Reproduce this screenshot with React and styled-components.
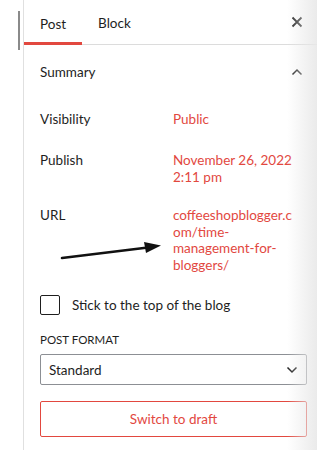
import React from "react";
import styled, { createGlobalStyle } from "styled-components";

const RED = "#e2483f";

const GlobalStyle = createGlobalStyle`
	body {
		margin: 0;
		background: #fff;
		font-family: "Segoe UI", Lato, "Noto Sans", sans-serif;
		font-size: 13px;
		color: #1e1e1e;
	}
`;

const Page = styled.div`
	position: relative;
	display: flex;
	width: 317px;
	height: 450px;
	overflow: hidden;

	&::after {
		content: "";
		position: absolute;
		top: 0;
		right: 0;
		width: 30px;
		height: 100%;
		background: linear-gradient(to right, rgba(238, 238, 238, 0), rgba(232, 232, 232, 0.9));
		pointer-events: none;
	}
`;

const Gutter = styled.div`
	width: 23px;
	flex-shrink: 0;
	padding-top: 11px;
	box-sizing: border-box;

	span {
		display: block;
		width: 2px;
		height: 39px;
		margin-left: 18px;
		background: #8a8a8a;
	}
`;

const Panel = styled.div`
	flex: 1;
	border-left: 1px solid #e0e0e0;
	display: flex;
	flex-direction: column;
`;

const TabBar = styled.div`
	display: flex;
	align-items: stretch;
	height: 45px;
	border-bottom: 1px solid #dcdcdc;
	box-sizing: border-box;
	padding-right: 8px;
`;

const Tab = styled.div`
	display: flex;
	align-items: center;
	padding: 2px 16px 0;
	font-size: 13.5px;
	color: #1e1e1e;
	box-shadow: ${(p) => (p.$active ? `inset 0 -3px 0 ${RED}` : "none")};
	margin-bottom: ${(p) => (p.$active ? "-1px" : "0")};
`;

const IconButton = styled.div`
	margin-left: auto;
	display: flex;
	align-items: center;
	justify-content: center;
	width: 24px;
`;

const SectionHeader = styled.div`
	display: flex;
	align-items: center;
	justify-content: space-between;
	height: 52px;
	padding: 2px 8px 0 16px;
	box-sizing: border-box;
	font-size: 13.5px;
`;

const Body = styled.div`
	position: relative;
	padding: 14px 10px 0 16px;
	display: flex;
	flex-direction: column;
	font-size: 13.5px;
`;

const Row = styled.div`
	display: grid;
	grid-template-columns: 133px 1fr;
	line-height: 17px;
	margin-bottom: ${(p) => p.$gap}px;
`;

const Label = styled.div`
	color: #1e1e1e;
`;

const Value = styled.div`
	color: ${RED};
	line-height: ${(p) => p.$lh || 17}px;
`;

const CheckRow = styled.label`
	display: flex;
	align-items: center;
	gap: 12px;
	margin-top: 21px;
`;

const Box = styled.span`
	width: 18px;
	height: 18px;
	border: 1px solid #1e1e1e;
	border-radius: 2px;
	flex-shrink: 0;
`;

const FieldLabel = styled.div`
	margin-top: 17px;
	font-size: 11.5px;
	line-height: 15px;
	text-transform: uppercase;
	color: #1e1e1e;
`;

const Select = styled.div`
	margin-top: 7px;
	height: 31px;
	box-sizing: border-box;
	border: 1px solid #8c8f94;
	border-radius: 2px;
	display: flex;
	align-items: center;
	justify-content: space-between;
	padding: 1px 8px 0;
`;

const DraftButton = styled.div`
	margin-top: 16px;
	height: 36px;
	box-sizing: border-box;
	border: 1px solid ${RED};
	border-radius: 2px;
	display: flex;
	align-items: center;
	justify-content: center;
	padding-top: 1px;
	color: ${RED};
`;

const Arrow = styled.svg`
	position: absolute;
	left: 12px;
	top: 136px;
	pointer-events: none;
`;

const CloseIcon = () => (
	<svg width="12" height="12" viewBox="0 0 12 12">
		<path d="M1.5 1.5 L10.5 10.5 M10.5 1.5 L1.5 10.5" stroke="#1e1e1e" strokeWidth="1.8" />
	</svg>
);

const Chevron = ({ up }) => (
	<svg width="12" height="8" viewBox="0 0 12 8">
		<path
			d={up ? "M1.5 6.5 L6 2 L10.5 6.5" : "M1.5 1.5 L6 6 L10.5 1.5"}
			stroke="#1e1e1e"
			strokeWidth="1.5"
			fill="none"
		/>
	</svg>
);

export default function App() {
	return (
		<>
			<GlobalStyle />
			<Page>
				<Gutter>
					<span />
				</Gutter>
				<Panel>
					<TabBar>
						<Tab $active>Post</Tab>
						<Tab>Block</Tab>
						<IconButton>
							<CloseIcon />
						</IconButton>
					</TabBar>
					<SectionHeader>
						<span>Summary</span>
						<IconButton>
							<Chevron up />
						</IconButton>
					</SectionHeader>
					<Body>
						<Row $gap={24}>
							<Label>Visibility</Label>
							<Value>Public</Value>
						</Row>
						<Row $gap={21}>
							<Label>Publish</Label>
							<Value>
								November 26, 2022
								<br />
								2:11 pm
							</Value>
						</Row>
						<Row $gap={0}>
							<Label>URL</Label>
							<Value $lh={16.7}>
								coffeeshopblogger.c
								<br />
								om/time-
								<br />
								management-for-
								<br />
								bloggers/
							</Value>
						</Row>
						<Arrow width="130" height="30" viewBox="0 0 130 30">
							<path d="M26 25 L112 14.5" stroke="#111" strokeWidth="2.6" strokeLinecap="round" />
							<path d="M108 9 L125 12.5 L110 20 Z" fill="#111" />
						</Arrow>
						<CheckRow>
							<Box />
							<span>Stick to the top of the blog</span>
						</CheckRow>
						<FieldLabel>Post Format</FieldLabel>
						<Select>
							<span>Standard</span>
							<Chevron />
						</Select>
						<DraftButton>Switch to draft</DraftButton>
					</Body>
				</Panel>
			</Page>
		</>
	);
}
